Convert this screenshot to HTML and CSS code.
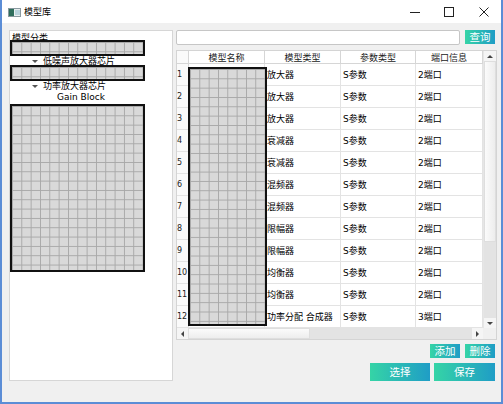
FILE: index.html
```html
<!DOCTYPE html>
<html lang="zh">
<head>
    <meta charset="UTF-8">
    <title>模型库</title>
    <link rel="stylesheet" href="styles.css">
</head>
<body>
<div class="window">
    <div class="titlebar">
        <svg class="titlebar__icon" width="13" height="9" viewBox="0 0 13 9">
            <rect x="0.5" y="0.5" width="12" height="8" fill="#e8eef0" stroke="#8a9aa0"/>
            <rect x="1" y="1" width="5" height="7" fill="#2f6e5c"/>
            <rect x="7" y="2" width="5" height="5" fill="#b9d3dc"/>
        </svg>
        <span class="titlebar__title">模型库</span>
        <div class="titlebar__controls">
            <div class="titlebar__btn">
                <svg width="10" height="10" viewBox="0 0 10 10"><path d="M0 5.5H10" stroke="#222" stroke-width="1"/></svg>
            </div>
            <div class="titlebar__btn">
                <svg width="10" height="10" viewBox="0 0 10 10"><rect x="0.5" y="0.5" width="9" height="9" fill="none" stroke="#222"/></svg>
            </div>
            <div class="titlebar__btn">
                <svg width="10" height="10" viewBox="0 0 10 10"><path d="M0.5 0.5L9.5 9.5M9.5 0.5L0.5 9.5" stroke="#222" stroke-width="1"/></svg>
            </div>
        </div>
    </div>
    <div class="client">
        <div class="tree">
            <div class="tree__head">模型分类</div>
            <div class="redact tree__redact"></div>
            <div class="tree__item tree__item--first"><span class="tree__arrow"></span>低噪声放大器芯片</div>
            <div class="redact tree__redact"></div>
            <div class="tree__item"><span class="tree__arrow"></span>功率放大器芯片</div>
            <div class="tree__item tree__item--leaf">Gain Block</div>
            <div class="redact tree__redact tree__redact--big"></div>
        </div>
        <div class="main">
            <div class="search">
                <div class="search__input"></div>
                <button class="btn search__btn">查询</button>
            </div>
            <div class="table">
                <div class="table__view">
                    <div class="table__row table__row--head">
                        <div class="table__cell table__cell--num"></div>
                        <div class="table__cell table__cell--th">模型名称</div>
                        <div class="table__cell table__cell--th">模型类型</div>
                        <div class="table__cell table__cell--th">参数类型</div>
                        <div class="table__cell table__cell--th">端口信息</div>
                    </div>
                    <div class="table__row">
                        <div class="table__cell table__cell--num">1</div>
                        <div class="table__cell"></div>
                        <div class="table__cell">放大器</div>
                        <div class="table__cell">S参数</div>
                        <div class="table__cell">2端口</div>
                    </div>
                    <div class="table__row">
                        <div class="table__cell table__cell--num">2</div>
                        <div class="table__cell"></div>
                        <div class="table__cell">放大器</div>
                        <div class="table__cell">S参数</div>
                        <div class="table__cell">2端口</div>
                    </div>
                    <div class="table__row">
                        <div class="table__cell table__cell--num">3</div>
                        <div class="table__cell"></div>
                        <div class="table__cell">放大器</div>
                        <div class="table__cell">S参数</div>
                        <div class="table__cell">2端口</div>
                    </div>
                    <div class="table__row">
                        <div class="table__cell table__cell--num">4</div>
                        <div class="table__cell"></div>
                        <div class="table__cell">衰减器</div>
                        <div class="table__cell">S参数</div>
                        <div class="table__cell">2端口</div>
                    </div>
                    <div class="table__row">
                        <div class="table__cell table__cell--num">5</div>
                        <div class="table__cell"></div>
                        <div class="table__cell">衰减器</div>
                        <div class="table__cell">S参数</div>
                        <div class="table__cell">2端口</div>
                    </div>
                    <div class="table__row">
                        <div class="table__cell table__cell--num">6</div>
                        <div class="table__cell"></div>
                        <div class="table__cell">混频器</div>
                        <div class="table__cell">S参数</div>
                        <div class="table__cell">2端口</div>
                    </div>
                    <div class="table__row">
                        <div class="table__cell table__cell--num">7</div>
                        <div class="table__cell"></div>
                        <div class="table__cell">混频器</div>
                        <div class="table__cell">S参数</div>
                        <div class="table__cell">2端口</div>
                    </div>
                    <div class="table__row">
                        <div class="table__cell table__cell--num">8</div>
                        <div class="table__cell"></div>
                        <div class="table__cell">限幅器</div>
                        <div class="table__cell">S参数</div>
                        <div class="table__cell">2端口</div>
                    </div>
                    <div class="table__row">
                        <div class="table__cell table__cell--num">9</div>
                        <div class="table__cell"></div>
                        <div class="table__cell">限幅器</div>
                        <div class="table__cell">S参数</div>
                        <div class="table__cell">2端口</div>
                    </div>
                    <div class="table__row">
                        <div class="table__cell table__cell--num">10</div>
                        <div class="table__cell"></div>
                        <div class="table__cell">均衡器</div>
                        <div class="table__cell">S参数</div>
                        <div class="table__cell">2端口</div>
                    </div>
                    <div class="table__row">
                        <div class="table__cell table__cell--num">11</div>
                        <div class="table__cell"></div>
                        <div class="table__cell">均衡器</div>
                        <div class="table__cell">S参数</div>
                        <div class="table__cell">2端口</div>
                    </div>
                    <div class="table__row">
                        <div class="table__cell table__cell--num">12</div>
                        <div class="table__cell"></div>
                        <div class="table__cell">功率分配 合成器</div>
                        <div class="table__cell">S参数</div>
                        <div class="table__cell">3端口</div>
                    </div>
                    <div class="redact table__redact"></div>
                </div>
                <div class="vscroll">
                    <div class="scroll__arrow"><span class="arrow arrow--up"></span></div>
                    <div class="vscroll__thumb"></div>
                    <div class="scroll__track"></div>
                    <div class="scroll__arrow"><span class="arrow arrow--down"></span></div>
                </div>
                <div class="hscroll">
                    <div class="scroll__arrow"><span class="arrow arrow--left"></span></div>
                    <div class="hscroll__thumb"></div>
                    <div class="scroll__track"></div>
                    <div class="scroll__arrow"><span class="arrow arrow--right"></span></div>
                </div>
                <div class="table__corner"></div>
            </div>
            <div class="actions actions--small">
                <button class="btn actions__btn">添加</button>
                <button class="btn actions__btn">删除</button>
            </div>
            <div class="actions actions--big">
                <button class="btn actions__btn">选择</button>
                <button class="btn actions__btn">保存</button>
            </div>
        </div>
    </div>
</div>
</body>
</html>
```

FILE: styles.css
```css
* {
    box-sizing: border-box;
}

body {
    margin: 0;
    font-family: "DejaVu Sans", "Noto Sans CJK SC", sans-serif;
    font-size: 9px;
    color: #000;
}

.window {
    width: 503px;
    height: 404px;
    display: flex;
    flex-direction: column;
    border-left: 2px solid #5b8dd6;
    border-right: 2px solid #5b8dd6;
    border-bottom: 2px solid #5b8dd6;
    background: #f0f0f0;
}

.titlebar {
    height: 23px;
    display: flex;
    align-items: center;
    padding-left: 6px;
    background: #fff;
}

.titlebar__icon {
    display: block;
    margin-top: 1px;
}

.titlebar__title {
    margin-left: 3px;
    font-family: "Noto Sans CJK SC", sans-serif;
}

.titlebar__controls {
    margin-left: auto;
    display: flex;
    height: 100%;
}

.titlebar__btn {
    width: 34.5px;
    display: flex;
    align-items: center;
    justify-content: center;
}

.titlebar__btn svg {
    display: block;
}

.client {
    flex: 1;
    display: flex;
    align-items: flex-start;
    padding: 7px 4px 0 7px;
}

/* tree */

.tree {
    width: 164px;
    height: 351px;
    border: 1px solid #d6d6d6;
    background: #fff;
    line-height: 12px;
}

.tree__head {
    height: 9px;
    padding-left: 2px;
    line-height: 14px;
    font-family: "Noto Sans CJK SC", sans-serif;
}

.tree__redact {
    width: 135px;
    height: 16px;
}

.tree__redact--big {
    height: 168px;
    margin-top: 1px;
}

.tree__item {
    height: 11px;
    line-height: 11px;
    padding-left: 22px;
    display: flex;
    align-items: center;
    white-space: nowrap;
}

.tree__item--first {
    height: 9px;
    padding-top: 2px;
}

.tree__item--leaf {
    padding-left: 47px;
}

.tree__arrow {
    width: 0;
    height: 0;
    margin-right: 5px;
    border-left: 3px solid transparent;
    border-right: 3px solid transparent;
    border-top: 3px solid #555;
}

/* redacted blocks */

.redact {
    position: relative;
    border: 2px solid #111;
    background-color: #d9d9d9;
    background-image: linear-gradient(90deg, #a8a8a8 1px, transparent 1px),
        linear-gradient(#a8a8a8 1px, transparent 1px);
    background-size: 9.33px 9.33px;
}

/* right side */

.main {
    width: 321px;
    margin-left: 3px;
    display: flex;
    flex-direction: column;
}

.search {
    height: 15px;
    display: flex;
    gap: 5px;
    padding-right: 2px;
}

.search__input {
    flex: 1;
    height: 15px;
    border: 1px solid #c6c6c6;
    border-radius: 2px;
    background: #fff;
}

.btn {
    border: none;
    padding: 0;
    color: #fff;
    font-family: "Noto Sans CJK SC", sans-serif;
    font-size: 10.5px;
    background: linear-gradient(90deg, #35d4a6, #1f9dc6);
}

.search__btn {
    width: 30px;
    height: 14px;
    line-height: 14px;
}

.table {
    margin-top: 5px;
    height: 290px;
    border: 1px solid #d4d4d4;
    background: #fff;
    display: grid;
    grid-template-columns: 1fr 13px;
    grid-template-rows: 1fr 11px;
}

.table__view {
    position: relative;
    overflow: hidden;
}

.table__row {
    height: 22px;
    display: grid;
    grid-template-columns: 12px 76px 76px 75px 1fr;
    border-bottom: 1px solid #e3e3e3;
}

.table__row--head {
    height: 13px;
    border-bottom-color: #d6d6d6;
}

.table__cell {
    display: flex;
    align-items: center;
    padding-left: 2px;
    border-right: 1px solid #e3e3e3;
    white-space: nowrap;
    overflow: hidden;
}

.table__cell--th {
    justify-content: center;
    padding-left: 0;
    border-right-color: #d6d6d6;
    color: #222;
}

.table__cell--num {
    padding-left: 0;
    overflow: visible;
    background: #fafafa;
    border-right-color: #d6d6d6;
    color: #222;
    font-size: 8px;
    letter-spacing: -0.2px;
}

.table__redact {
    position: absolute;
    left: 11px;
    top: 16px;
    width: 79px;
    height: 259px;
}

.vscroll, .hscroll {
    display: flex;
    background: #f0f0f0;
}

.vscroll {
    flex-direction: column;
    border-left: 1px solid #e6e6e6;
}

.scroll__arrow {
    flex: 0 0 10px;
    display: flex;
    align-items: center;
    justify-content: center;
    background: #f5f5f5;
}

.scroll__track {
    flex: 1;
    background: #e3e3e3;
}

.vscroll__thumb {
    height: 181px;
    background: linear-gradient(90deg, #fbfbfb, #ededed);
    border: 1px solid #dedede;
}

.hscroll__thumb {
    width: 122px;
    background: linear-gradient(#fbfbfb, #ededed);
    border: 1px solid #dedede;
}

.hscroll .scroll__arrow {
    flex-basis: 11px;
}

.table__corner {
    background: #f0f0f0;
}

.arrow {
    width: 0;
    height: 0;
}

.arrow--up {
    border-left: 3px solid transparent;
    border-right: 3px solid transparent;
    border-bottom: 3px solid #444;
}

.arrow--down {
    border-left: 3px solid transparent;
    border-right: 3px solid transparent;
    border-top: 3px solid #444;
}

.arrow--left {
    border-top: 3px solid transparent;
    border-bottom: 3px solid transparent;
    border-right: 3px solid #444;
}

.arrow--right {
    border-top: 3px solid transparent;
    border-bottom: 3px solid transparent;
    border-left: 3px solid #444;
}

.actions {
    display: flex;
    justify-content: flex-end;
    padding-right: 2px;
}

.actions--small {
    margin-top: 4px;
    gap: 5px;
}

.actions--small .actions__btn {
    width: 30px;
    height: 14px;
    line-height: 14px;
}

.actions--big {
    margin-top: 5px;
    gap: 4px;
}

.actions--big .actions__btn {
    width: 60px;
    height: 18px;
    line-height: 18px;
}

.actions--big .actions__btn:last-child {
    width: 61px;
}
```
